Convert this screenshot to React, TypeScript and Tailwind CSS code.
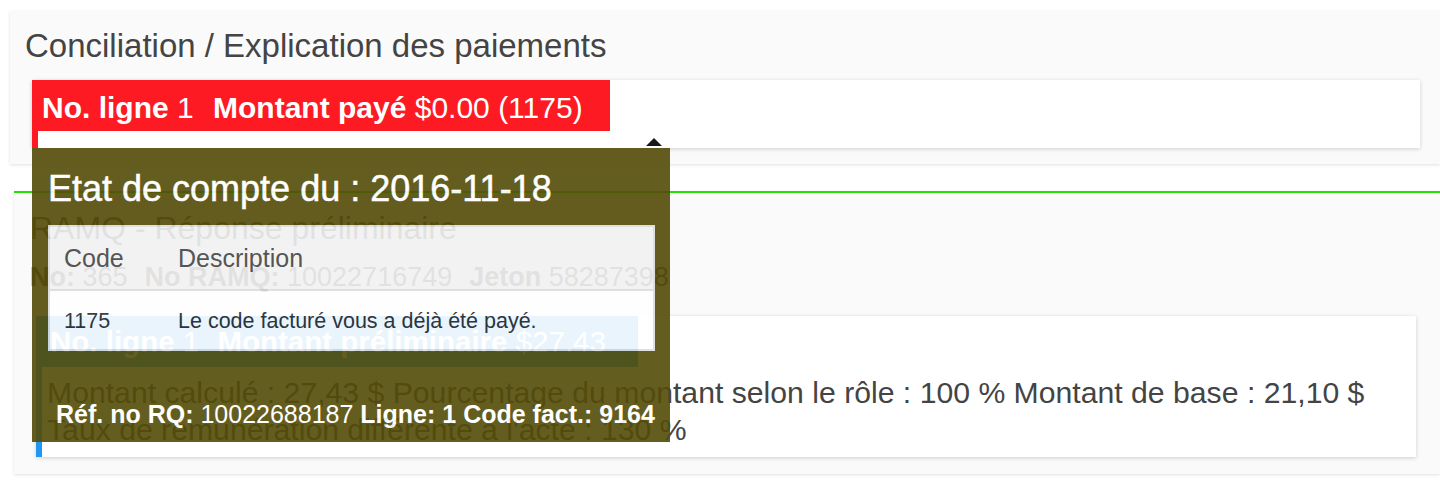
export default function App() {
  return (
    <div className="min-h-screen bg-white pt-[11px] font-['Liberation_Sans',Arial,sans-serif] text-[#444]">
      {/* Conciliation card */}
      <div className="ml-[10px] bg-[#fafafa] pl-[15px] pr-[20px] pt-[17px] pb-[16px] shadow-[0_1px_3px_rgba(0,0,0,0.12)]">
        <h2 className="text-[33px] leading-[36px] font-normal">Conciliation / Explication des paiements</h2>
        <div className="relative mt-[16px] ml-[7px] h-[68px] border-l-[6px] border-[#fe1a22] bg-white shadow-[0_1px_4px_rgba(0,0,0,0.18)]">
          <div className="w-[572px] h-[51px] bg-[#fe1a22] pl-[4px] pt-[2px] text-[30px] leading-[51px] text-white whitespace-nowrap">
            <span className="font-bold">No. ligne</span> 1 <span className="ml-[11px] font-bold">Montant payé</span> $0.00 (1175)
          </div>

          {/* tooltip */}
          <div className="absolute top-full left-[-6px] z-10 w-[638px] h-[294px] bg-[#544c08] opacity-90 px-[16px] pt-[22px]">
            <div className="absolute -top-[10px] right-[8px] w-0 h-0 border-x-[8px] border-x-transparent border-b-[8px] border-b-black" />
            <div className="text-[36px] leading-[38px] text-white [-webkit-text-stroke:0.5px_white]">Etat de compte du : 2016-11-18</div>
            <div className="mt-[17px] w-[607px] border-2 border-[#dddddd] bg-white">
              <div className="grid grid-cols-[114px_1fr] bg-[#f2f2f2] border-b-2 border-[#dddddd] text-[25px] leading-[30px] text-[#444]">
                <div className="px-[14px] pt-[16px] pb-[16px]">Code</div>
                <div className="px-[14px] pt-[16px] pb-[16px]">Description</div>
              </div>
              <div className="grid grid-cols-[114px_1fr] text-[21.5px] leading-[26px] text-[#2b2b2b]">
                <div className="px-[14px] pt-[17px] pb-[15px]">1175</div>
                <div className="px-[14px] pt-[17px] pb-[15px]">Le code facturé vous a déjà été payé.</div>
              </div>
            </div>
            <div className="mt-[49px] pl-[8px] text-[25px] leading-[28px] text-white whitespace-nowrap">
              <span className="font-bold">Réf. no RQ:</span> 10022688187 <span className="font-bold">Ligne: 1 Code fact.: 9164</span>
            </div>
          </div>
        </div>
      </div>

      {/* RAMQ card */}
      <div className="mt-[27px] ml-[14px] border-t-2 border-[#22e000] bg-[#fafafa] pl-[16px] pr-[24px] pt-[17px] pb-[17px] shadow-[0_1px_3px_rgba(0,0,0,0.12)]">
        <h2 className="text-[32px] leading-[36px] font-normal">RAMQ - Réponse préliminaire</h2>
        <div className="mt-[15px] flex gap-[17px] text-[27px] leading-[32px] whitespace-nowrap">
          <span><span className="font-bold">No:</span> 365</span>
          <span><span className="font-bold">No RAMQ:</span> 10022716749</span>
          <span><span className="font-bold">Jeton</span> 58287398</span>
        </div>
        <div className="mt-[23px] ml-[6px] border-l-[6px] border-[#2196f3] bg-white pb-[9px] shadow-[0_1px_4px_rgba(0,0,0,0.18)]">
          <div className="w-[596px] h-[51px] bg-[#2196f3] pl-[8px] text-[29.5px] leading-[51px] text-white whitespace-nowrap">
            <span className="font-bold">No. ligne</span> 1 <span className="ml-[10px] font-bold">Montant préliminaire</span> $27.43
          </div>
          <div className="pt-[7px] pl-[5px] text-[30.2px] leading-[37px] whitespace-nowrap">
            <div>Montant calculé : 27,43 $ Pourcentage du montant selon le rôle : 100 % Montant de base : 21,10 $</div>
            <div>Taux de rémunération différente à l'acte : 130 %</div>
          </div>
        </div>
      </div>
    </div>
  );
}
